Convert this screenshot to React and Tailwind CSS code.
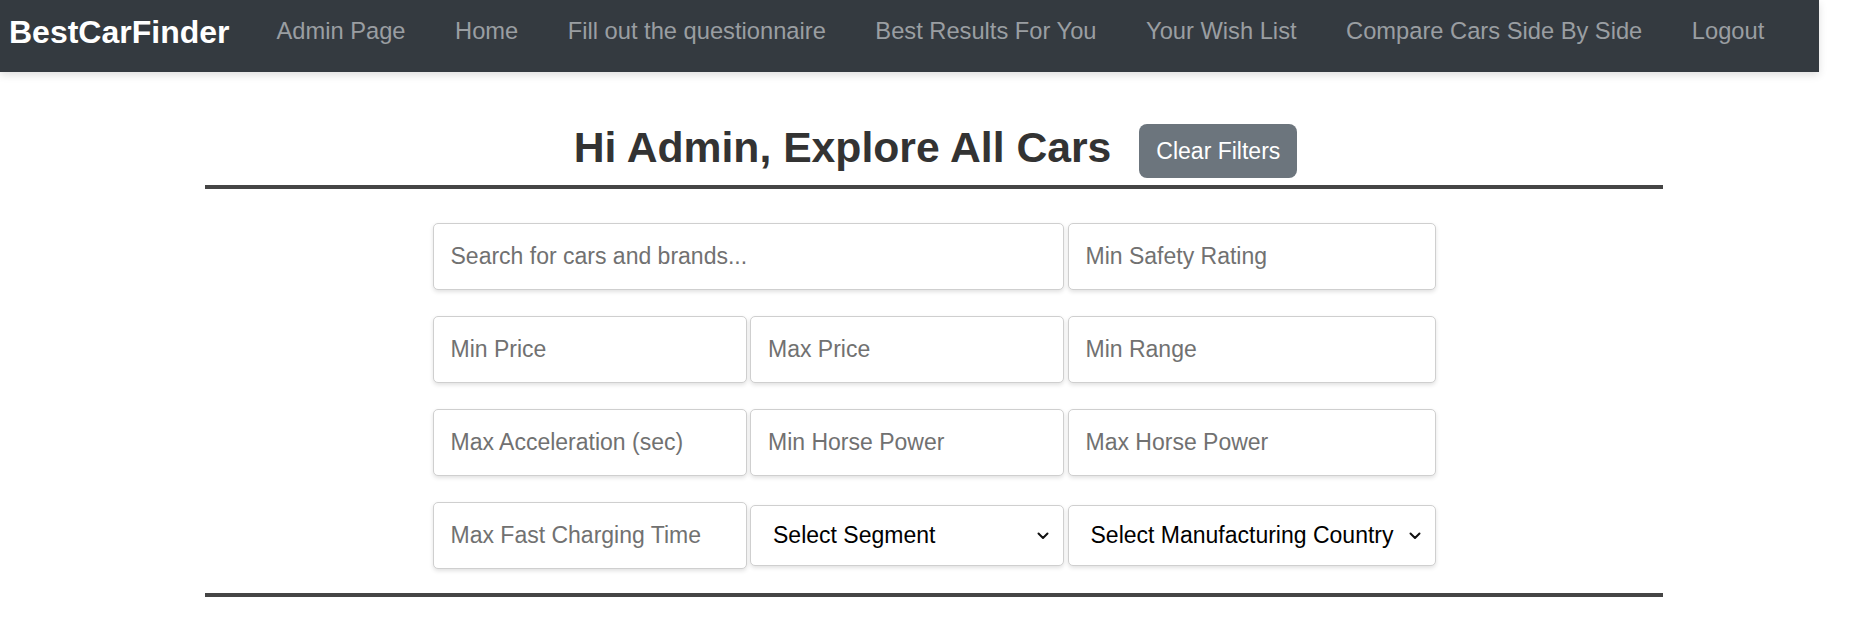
import React from "react";

const links = [
  "Admin Page",
  "Home",
  "Fill out the questionnaire",
  "Best Results For You",
  "Your Wish List",
  "Compare Cars Side By Side",
  "Logout",
];

function Field({ placeholder, className = "" }) {
  return (
    <input
      type="text"
      placeholder={placeholder}
      className={
        "h-[67px] w-full rounded-[5px] border border-[#cfcfcf] bg-white px-[17px] text-[23px] text-black shadow-[0_2px_4px_rgba(0,0,0,0.12)] outline-none placeholder:text-[#717171] " +
        className
      }
    />
  );
}

function Select({ label }) {
  return (
    <div className="relative">
      <select className="h-[61px] w-full appearance-none rounded-[5px] border border-[#cfcfcf] bg-white pl-[22px] pr-[40px] text-[23px] text-black shadow-[0_2px_4px_rgba(0,0,0,0.12)] outline-none">
        <option>{label}</option>
      </select>
      <svg
        className="pointer-events-none absolute right-[15px] top-1/2 -translate-y-1/2"
        width="12"
        height="8"
        viewBox="0 0 12 8"
        fill="none"
      >
        <path d="M1.5 1.5 L6 6 L10.5 1.5" stroke="#111" strokeWidth="2" strokeLinecap="round" strokeLinejoin="round" />
      </svg>
    </div>
  );
}

export default function App() {
  return (
    <div className="h-[629px] w-[1856px] overflow-hidden bg-white font-['Liberation_Sans',Arial,sans-serif]">
      <nav className="flex h-[72px] w-[1819px] items-center bg-[#343a40] pb-[9px] shadow-[0_3px_8px_rgba(0,0,0,0.13)]">
        <span className="pl-[9px] text-[32px] font-bold leading-none text-white">BestCarFinder</span>
        <div className="ml-[47px] flex gap-[49.5px] text-[23.7px] leading-none text-[#9a9ea2]">
          {links.map((l) => (
            <a key={l} className="whitespace-nowrap">
              {l}
            </a>
          ))}
        </div>
      </nav>

      <main className="ml-[205px] w-[1458px] pt-[52px]">
        <div className="flex h-[54px] items-center justify-center gap-[28px] pl-[3px]">
          <h2 className="-mt-[8px] text-[42.7px] font-bold leading-[54px] text-[#333]">Hi Admin, Explore All Cars</h2>
          <button className="h-[54px] rounded-[8px] bg-[#6c757d] px-[17px] text-[23px] text-white">Clear Filters</button>
        </div>
        <div className="mt-[7px] h-[4px] bg-[#454545]" />

        <div className="mx-auto mt-[34px] grid w-[1003px] grid-cols-[314px_314px_368px] items-center gap-x-[3.5px] gap-y-[26px]">
          <Field placeholder="Search for cars and brands..." className="col-span-2" />
          <Field placeholder="Min Safety Rating" />
          <Field placeholder="Min Price" />
          <Field placeholder="Max Price" />
          <Field placeholder="Min Range" />
          <Field placeholder="Max Acceleration (sec)" />
          <Field placeholder="Min Horse Power" />
          <Field placeholder="Max Horse Power" />
          <Field placeholder="Max Fast Charging Time" />
          <Select label="Select Segment" />
          <Select label="Select Manufacturing Country" />
        </div>
        <div className="mt-[24px] h-[4px] bg-[#454545]" />
      </main>
    </div>
  );
}
